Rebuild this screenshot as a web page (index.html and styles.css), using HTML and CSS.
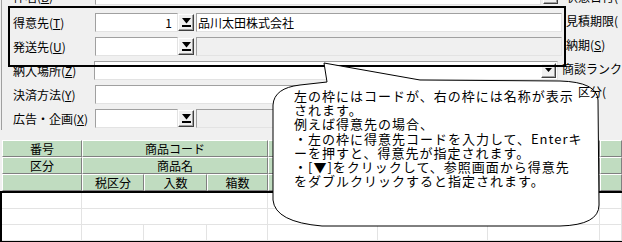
FILE: index.html
```html
<!DOCTYPE html>
<html lang="ja">
<head>
    <meta charset="UTF-8">
    <title>受注入力</title>
    <link rel="stylesheet" href="styles.css">
</head>
<body>
<div class="screen">
    <div class="form">
        <div class="row row-top">
            <span class="lbl">件名(<u>B</u>)</span>
            <div class="fields">
                <span class="box grow"></span>
                <span class="btn mini"></span>
            </div>
            <span class="rlbl">状態日付(</span>
        </div>
        <div class="row">
            <span class="lbl">得意先(<u>T</u>)</span>
            <div class="fields">
                <span class="box code">1</span>
                <span class="btn"><svg width="9" height="9" viewBox="0 0 9 9"><polygon points="0,0 9,0 4.5,5.5"/><rect x="0" y="7" width="9" height="2"/></svg></span>
                <span class="box name">品川太田株式会社</span>
            </div>
            <span class="rlbl">見積期限(</span>
        </div>
        <div class="row">
            <span class="lbl">発送先(<u>U</u>)</span>
            <div class="fields">
                <span class="box code"></span>
                <span class="btn"><svg width="9" height="9" viewBox="0 0 9 9"><polygon points="0,0 9,0 4.5,5.5"/><rect x="0" y="7" width="9" height="2"/></svg></span>
                <span class="box name off"></span>
            </div>
            <span class="rlbl">納期(<u>S</u>)</span>
        </div>
        <div class="row">
            <span class="lbl">納入場所(<u>Z</u>)</span>
            <div class="fields">
                <span class="box grow combo"><span class="arrow"><svg width="7" height="4" viewBox="0 0 7 4"><polygon points="0,0 7,0 3.5,4"/></svg></span></span>
            </div>
            <span class="rlbl">商談ランク</span>
        </div>
        <div class="row">
            <span class="lbl">決済方法(<u>Y</u>)</span>
            <div class="fields">
                <span class="box grow"></span>
            </div>
            <span class="rlbl front">区分(</span>
        </div>
        <div class="row">
            <span class="lbl">広告・企画(<u>X</u>)</span>
            <div class="fields">
                <span class="box code"></span>
                <span class="btn"><svg width="9" height="9" viewBox="0 0 9 9"><polygon points="0,0 9,0 4.5,5.5"/><rect x="0" y="7" width="9" height="2"/></svg></span>
                <span class="box name off"></span>
            </div>
        </div>
    </div>

    <div class="table">
        <div class="head">
            <div class="hc">番号</div>
            <div class="hc span3">商品コード</div>
            <div class="hc"></div>
            <div class="hc"></div>
            <div class="hc"></div>
            <div class="hc"></div>

            <div class="hc">区分</div>
            <div class="hc span3">商品名</div>
            <div class="hc"></div>
            <div class="hc"></div>
            <div class="hc"></div>
            <div class="hc"></div>

            <div class="hc"></div>
            <div class="hc">税区分</div>
            <div class="hc">入数</div>
            <div class="hc">箱数</div>
            <div class="hc"></div>
            <div class="hc"></div>
            <div class="hc"></div>
            <div class="hc"></div>
        </div>
        <div class="body">
            <div class="gc"></div>
            <div class="gc span3"></div>
            <div class="gc"></div>
            <div class="gc"></div>
            <div class="gc"></div>
            <div class="gc"></div>

            <div class="gc"></div>
            <div class="gc span3"></div>
            <div class="gc"></div>
            <div class="gc"></div>
            <div class="gc"></div>
            <div class="gc"></div>

            <div class="gc"></div>
            <div class="gc"></div>
            <div class="gc"></div>
            <div class="gc"></div>
            <div class="gc"></div>
            <div class="gc"></div>
            <div class="gc"></div>
            <div class="gc"></div>
        </div>
    </div>

    <!-- 説明用の枠と吹き出し -->
    <div class="focus"></div>
    <svg class="bubble" width="622" height="242" viewBox="0 0 622 242">
        <path d="M324 63 L420 80 L560 81 Q597 82 598 100 L599 205 Q599 225 560 226 L322 226 Q275 222 273 200 L273 105 Q274 88 300 85 L327 82 Z"/>
    </svg>
    <div class="note">
        左の枠にはコードが、右の枠には名称が表示<br>
        されます。<br>
        例えば得意先の場合、<br>
        ・左の枠に得意先コードを入力して、Enterキ<br>
        ーを押すと、得意先が指定されます。<br>
        ・[▼]をクリックして、参照画面から得意先<br>
        をダブルクリックすると指定されます。
    </div>
</div>
</body>
</html>
```

FILE: styles.css
```css
*{box-sizing:border-box;}
body{margin:0; background:#f0f0f0; font-family:"Noto Sans CJK JP", sans-serif; font-size:12px; color:#000; overflow:hidden;}
.screen{position:relative; width:622px; height:242px; overflow:hidden;}

.form{margin-top:-14px; margin-left:1px; border-left:1px solid #a0a0a0;}
.row{display:flex; align-items:center; height:24px;}
.row-top{align-items:flex-end; padding-bottom:5px;}
.lbl{width:93px; padding-left:11px; white-space:nowrap;}
.fields{display:flex; align-items:center; width:467px;}
.rlbl{margin-left:4px; margin-top:-4px; white-space:nowrap;}
.rlbl.front{position:relative; z-index:2; margin-left:16px; margin-top:-6px;}

.box{height:19px; background:#fff; border:1px solid; border-color:#a0a0a0 #e3e3e3 #e3e3e3 #a0a0a0; line-height:17px; padding:0 2px; white-space:nowrap; overflow:hidden;}
.box.off{background:#f0f0f0;}
.box.code{width:83px; text-align:right; padding-right:5px;}
.box.name{flex:1; margin-left:2px; padding-left:1px;}
.box.grow{flex:1;}
.box.combo{display:flex; justify-content:flex-end; padding:1px;}

.btn{width:16px; height:17px; background:#f0f0f0; border:1px solid; border-color:#fff #404040 #404040 #fff; box-shadow:inset -1px -1px #a0a0a0; display:flex; align-items:center; justify-content:center;}
.btn.mini{width:15px; margin-left:2px; margin-right:4px;}
.arrow{width:15px; height:100%; background:#f0f0f0; border:1px solid; border-color:#fff #404040 #404040 #fff; box-shadow:inset -1px -1px #a0a0a0; display:flex; align-items:center; justify-content:center;}

.table{margin-top:10px;}
.head{display:grid; grid-template-columns:80px 62px 63px 61px 110px 110px 112px 22px; grid-auto-rows:17px; margin-left:2px;}
.hc{background:#c0dcc0; border:1px solid; border-color:#fff #808080 #808080 #fff; text-align:center; line-height:15px; white-space:nowrap; overflow:hidden;}
.span3{grid-column:span 3;}
.body{display:grid; grid-template-columns:80px 62px 63px 61px 110px 110px 112px 22px; grid-template-rows:16px 16px 16px; border:2px solid #000; border-right:none; background:#fff;}
.gc{border-right:1px solid #e3e3e3; border-bottom:1px solid #e3e3e3;}

.focus{position:absolute; left:8px; top:6px; width:558px; height:61px; border:2px solid #000;}
.bubble{position:absolute; left:0; top:0;}
.bubble path{fill:#fff; stroke:#000; stroke-width:1;}
.note{position:absolute; left:294px; top:89px; font-size:13px; letter-spacing:1px; line-height:14.2px; white-space:nowrap;}
```
